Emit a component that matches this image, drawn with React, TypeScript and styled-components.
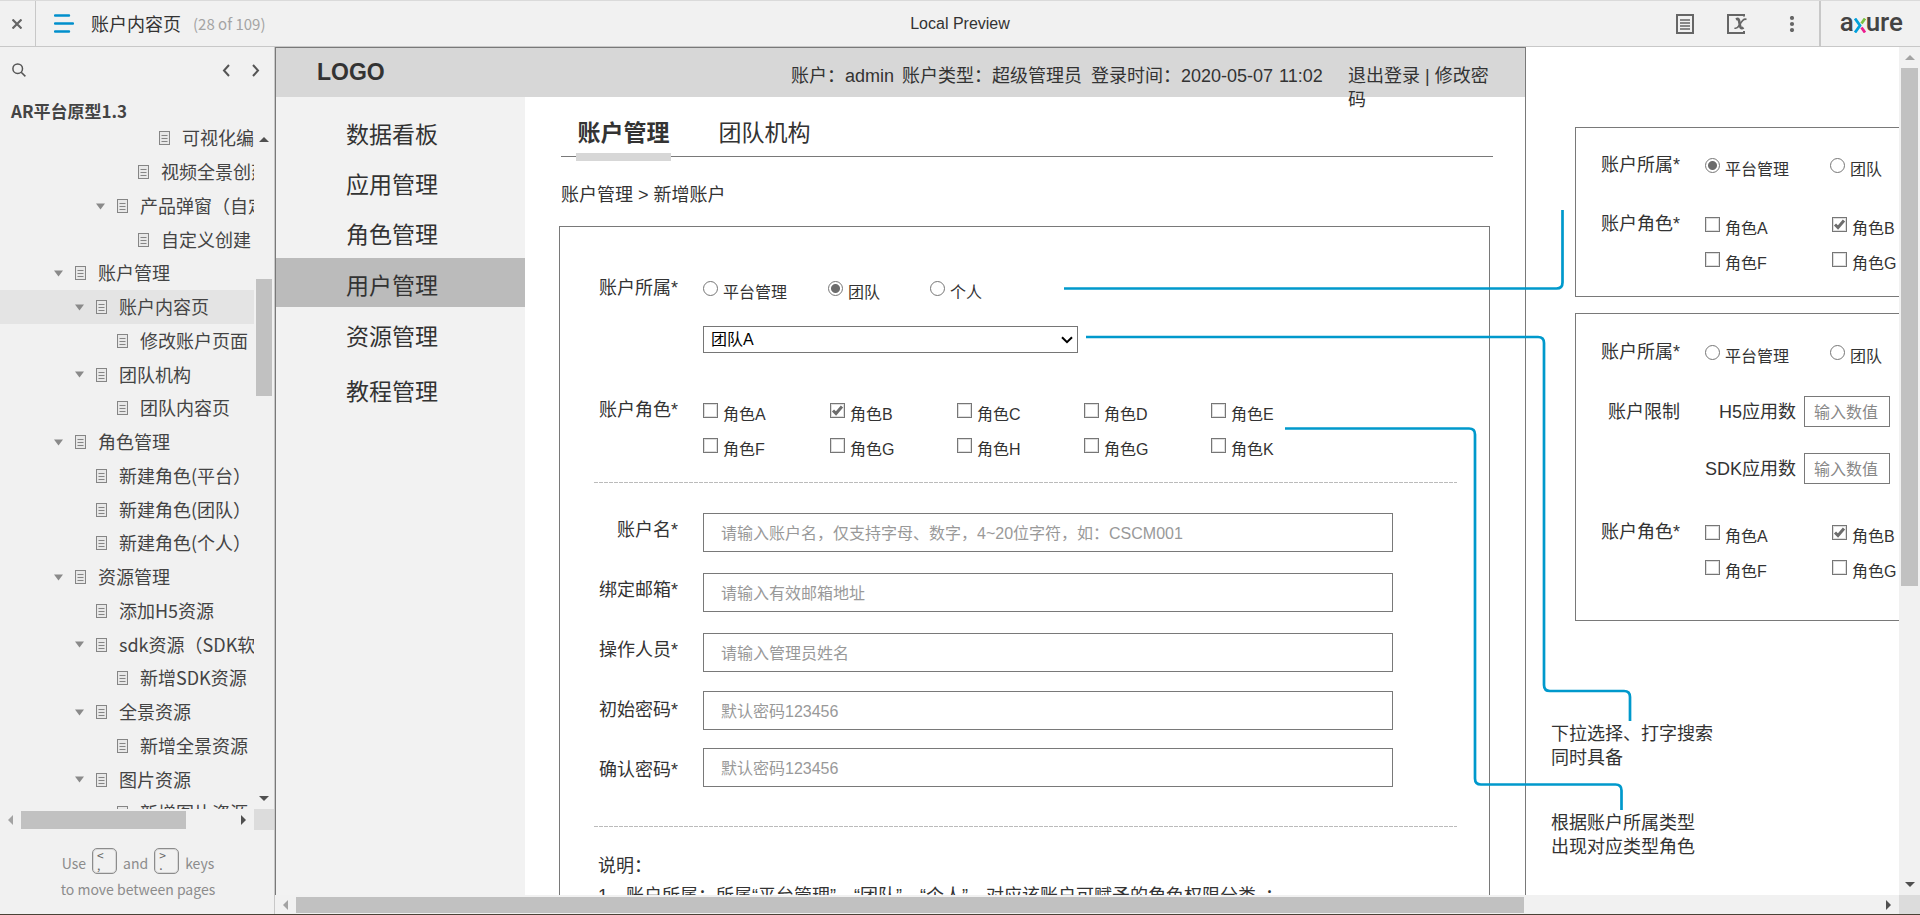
import React from 'react';
import styled, { createGlobalStyle, css } from 'styled-components';

const Global = createGlobalStyle`
  *, *::before, *::after { box-sizing: border-box; }
  html, body, #root { height: 100%; }
  body {
    margin: 0;
    overflow: hidden;
    background: #fff;
    color: #333;
    font-family: "Liberation Sans", "Noto Sans CJK SC", sans-serif;
    font-size: 18px;
    line-height: 24px;
  }
  button { padding: 0; border: 0; background: none; color: inherit; font: inherit; cursor: pointer; }
  ul { margin: 0; padding: 0; list-style: none; }
  p, h1, h2 { margin: 0; }
  svg { display: block; flex: none; }
`;

const uiFont = '"Noto Sans CJK SC", "Noto Sans", sans-serif';

/* ---------- shell ---------- */

const Shell = styled.div`
  display: flex;
  flex-direction: column;
  height: 100vh;
  border-top: 1px solid #dadada;
  border-bottom: 1px solid #4a4236;
`;

const TopBar = styled.header`
  display: grid;
  grid-template-columns: 1fr auto 1fr;
  flex: none;
  height: 46px;
  background: #f1f1f1;
  border-bottom: 1px solid #c8c8c8;
`;

const BarGroup = styled.div<{ $end?: boolean }>`
  display: flex;
  align-items: center;
  justify-content: ${(p) => (p.$end ? 'flex-end' : 'flex-start')};
`;

const CloseButton = styled.button`
  display: grid;
  place-items: center;
  width: 36px;
  height: 100%;
  padding-right: 2px;
  border-right: 1px solid #c8c8c8;
`;

const MenuButton = styled.button`
  margin: 0 17px 0 18px;
`;

const PageName = styled.h1`
  padding-bottom: 2px;
  font-family: ${uiFont};
  font-size: 18px;
  font-weight: 400;
  line-height: 24px;
`;

const PageCount = styled.span`
  margin-left: 12px;
  color: #a4a4a4;
  font-family: ${uiFont};
  font-size: 15px;
`;

const BarTitle = styled.div`
  align-self: center;
  font-size: 16px;
`;

const BarIcons = styled.div`
  display: flex;
  align-items: center;
  gap: 33px;
  padding-right: 12px;
`;

const Brand = styled.a`
  display: flex;
  align-items: center;
  height: 100%;
  padding: 0 17px 4px 19px;
  border-left: 2px solid #c8c8c8;
  color: #444;
  font-family: Roboto, sans-serif;
  font-size: 26px;
  font-weight: 500;
  line-height: 30px;
  text-decoration: none;
  svg { margin-top: 7px; }
`;

const Workspace = styled.div`
  display: flex;
  flex: 1;
  min-height: 0;
`;

/* ---------- sidebar ---------- */

const Sidebar = styled.aside`
  display: flex;
  flex-direction: column;
  flex: none;
  width: 275px;
  background: #f1f1f1;
  border-right: 1px solid #c8c8c8;
  font-family: ${uiFont};
`;

const SidebarTools = styled.div`
  display: flex;
  align-items: center;
  gap: 22px;
  padding: 0 14px 0 12px;
  height: 46px;
  flex: none;
`;

const SearchButton = styled.button`
  margin-right: auto;
`;

const ProjectName = styled.h2`
  flex: none;
  padding: 6px 0 0 11px;
  height: 28px;
  color: #444;
  font-size: 17px;
  font-weight: 700;
  line-height: 24px;
`;

const TreeArea = styled.div`
  display: flex;
  flex: 1;
  min-height: 0;
`;

const Tree = styled.ul`
  flex: 1;
  min-width: 0;
  overflow: hidden;
`;

const TreeRow = styled.li<{ $level: number; $selected?: boolean }>`
  display: flex;
  align-items: center;
  height: 34px;
  padding-left: ${(p) => 54 + p.$level * 21}px;
  background: ${(p) => (p.$selected ? '#e4e4e4' : 'transparent')};
  color: #444;
  white-space: nowrap;
  &:nth-child(4n) { height: 33px; }
`;

const Twisty = styled.span`
  flex: none;
  width: 21px;
`;

const TreeLabel = styled.a`
  margin-left: 12px;
  padding-bottom: 2px;
  color: inherit;
  font-size: 18px;
  line-height: 24px;
  text-decoration: none;
`;

const SidebarHint = styled.p`
  display: grid;
  align-content: start;
  justify-items: center;
  flex: none;
  height: 84px;
  padding: 18px 0 0 2px;
  color: #8c8c8c;
  font-size: 14px;
  line-height: 26px;
`;

const HintLine = styled.span`
  display: flex;
  align-items: flex-end;
  gap: 6px;
`;

const Key = styled.kbd`
  display: flex;
  flex-direction: column;
  width: 25px;
  height: 26px;
  margin-bottom: 2px;
  padding: 1px 4px;
  border: 1px solid #8c8c8c;
  border-radius: 5px;
  box-shadow: inset 0 0 0 1px #d8d8d8;
  color: #666;
  font-family: ${uiFont};
  font-size: 12px;
  line-height: 10px;
`;

/* ---------- scroll bars ---------- */

const VBar = styled.div<{ $width: number; $top?: number }>`
  display: flex;
  flex-direction: column;
  align-items: center;
  flex: none;
  width: ${(p) => p.$width}px;
  padding-top: ${(p) => p.$top || 0}px;
  background: #f1f1f1;
`;

const HBar = styled.div<{ $height: number }>`
  display: flex;
  align-items: center;
  flex: none;
  height: ${(p) => p.$height}px;
  background: #f1f1f1;
`;

const BarArrow = styled.button`
  display: grid;
  place-items: center;
  flex: none;
  width: 21px;
  height: 21px;
`;

const Track = styled.div<{ $vertical?: boolean }>`
  display: flex;
  flex: 1;
  align-self: stretch;
  min-height: 0;
  flex-direction: ${(p) => (p.$vertical ? 'column' : 'row')};
  ${(p) => (p.$vertical ? css`padding: 0 2px 0 2px;` : css`padding: 2px 0 1px;`)}
`;

const Thumb = styled.div<{ $before: number; $after: number }>`
  display: contents;
  &::before { content: ""; flex: ${(p) => p.$before} 1 0; }
  &::after { content: ""; flex: ${(p) => p.$after} 1 0; }
`;

const ThumbFace = styled.span<{ $size: number }>`
  flex: ${(p) => p.$size} 1 0;
  background: #c1c1c1;
`;

const Corner = styled.span<{ $width: number }>`
  flex: none;
  align-self: stretch;
  width: ${(p) => p.$width}px;
  background: #dcdcdc;
`;

/* ---------- prototype canvas ---------- */

const Viewport = styled.main`
  display: flex;
  flex-direction: column;
  flex: 1;
  min-width: 0;
`;

const ViewportRow = styled.div`
  display: flex;
  flex: 1;
  min-height: 0;
`;

const Canvas = styled.div`
  position: relative;
  display: flex;
  flex: 1;
  min-width: 0;
  overflow: hidden;
  background: #fff;
`;

const Frame = styled.section`
  display: flex;
  flex-direction: column;
  flex: none;
  width: 1251px;
  border: 1px solid #797979;
  border-bottom: 0;
`;

const FrameHeader = styled.div`
  display: flex;
  justify-content: space-between;
  flex: none;
  height: 49px;
  padding: 0 27px 0 41px;
  background: #d7d7d7;
`;

const Logo = styled.strong`
  font-size: 23px;
  line-height: 48px;
`;

const Session = styled.div`
  display: grid;
  grid-template-columns: 111px 189px 188px 69px 150px;
  padding-top: 16px;
`;

const SessionLink = styled.a`
  color: inherit;
  text-decoration: none;
`;

const FrameBody = styled.div`
  display: flex;
  flex: 1;
  min-height: 0;
`;

const SideNav = styled.nav`
  display: grid;
  grid-template-rows: 50px 50px 51px 51px 55px 49px;
  align-content: start;
  flex: none;
  width: 249px;
  padding-top: 10px;
  background: #f2f2f2;
`;

const NavItem = styled.button<{ $active?: boolean }>`
  height: 49px;
  padding: 7px 0 0 70px;
  background: ${(p) => (p.$active ? '#bbb' : 'transparent')};
  font-size: 23px;
  line-height: 30px;
  text-align: left;
`;

const FrameMain = styled.div`
  flex: 1;
  min-width: 0;
`;

const Tabs = styled.div`
  display: flex;
  gap: 46px;
  margin: 0 32px 0 36px;
  padding-left: 15px;
  border-bottom: 1px solid #797979;
`;

const Tab = styled.button<{ $active?: boolean }>`
  position: relative;
  min-width: 95px;
  padding: 21px 0 8px;
  font-size: 23px;
  font-weight: ${(p) => (p.$active ? 700 : 400)};
  line-height: 30px;
  ${(p) => p.$active && css`
    &::after {
      content: "";
      position: absolute;
      left: 0;
      right: 0;
      bottom: -5px;
      height: 8px;
      background: #d7d7d7;
    }
  `}
`;

const Crumbs = styled.p`
  margin: 26px 32px 19px 36px;
`;

const FormBox = styled.form`
  margin: 0 35px 0 34px;
  padding: 49px 32px 60px 0;
  border: 1px solid #797979;
`;

const Row = styled.div<{ $label: number; $top?: number; $center?: boolean }>`
  display: grid;
  grid-template-columns: ${(p) => p.$label}px 1fr;
  column-gap: 25px;
  align-items: ${(p) => (p.$center ? 'center' : 'start')};
  margin-top: ${(p) => p.$top || 0}px;
`;

const RowLabel = styled.span`
  text-align: right;
  white-space: nowrap;
`;

const Choices = styled.div<{ $cols: string }>`
  display: grid;
  grid-template-columns: ${(p) => p.$cols};
  row-gap: 11px;
  padding-top: 5px;
`;

const Choice = styled.label`
  display: flex;
  gap: 5px;
  font-size: 16px;
  line-height: 24px;
  white-space: nowrap;
`;

const Radio = styled.input.attrs({ type: 'radio' })`
  appearance: none;
  flex: none;
  width: 15px;
  height: 15px;
  margin: 0;
  border: 1px solid #767676;
  border-radius: 50%;
  background: #fff;
  &:checked { background: radial-gradient(circle, #6d6d6d 0 4px, #fff 5px); }
`;

const CheckWrap = styled.span`
  display: grid;
  width: 15px;
  height: 15px;
  > * { grid-area: 1 / 1; }
  svg { pointer-events: none; }
`;

const Checkbox = styled.input.attrs({ type: 'checkbox' })`
  appearance: none;
  width: 15px;
  height: 15px;
  margin: 0;
  border: 1px solid #767676;
  background: #fff;
  box-shadow: inset 0 0 0 1px #dedede;
`;

const SelectWrap = styled.div`
  display: grid;
  grid-column: 2;
  width: 375px;
  align-items: center;
  > * { grid-area: 1 / 1; }
  svg { justify-self: end; margin-right: 5px; pointer-events: none; }
`;

const Select = styled.select`
  appearance: none;
  height: 27px;
  padding: 0 7px;
  border: 1px solid #767676;
  border-radius: 0;
  background: #fff;
  color: #000;
  font: inherit;
  font-size: 16px;
`;

const Dashes = styled.hr<{ $top: number }>`
  height: 1px;
  margin: ${(p) => p.$top}px 0 0 34px;
  border: 0;
  background: repeating-linear-gradient(90deg, #bbb 0 4px, #fff 4px 5px);
`;

const Fields = styled.div`
  display: grid;
  grid-template-columns: 118px 690px;
  column-gap: 25px;
  margin-top: 17px;
`;

const FieldLabels = styled.div`
  display: flex;
  flex-direction: column;
  text-align: right;
  line-height: 60px;
`;

const FieldInputs = styled.div`
  display: grid;
  grid-template-rows: 60px 60px 58px 57px 39px;
  padding-top: 13px;
`;

const TextInput = styled.input<{ $small?: boolean }>`
  width: ${(p) => (p.$small ? '86px' : '100%')};
  height: ${(p) => (p.$small ? 31 : 39)}px;
  padding: 2px ${(p) => (p.$small ? '8px 0 9px' : '17px 0')};
  border: 1px solid #797979;
  border-radius: 0;
  background: #fff;
  color: #333;
  font: inherit;
  font-size: 16px;
  outline: none;
  &::placeholder { color: ${(p) => (p.$small ? '#888' : '#999')}; opacity: 1; }
`;

const Remarks = styled.div`
  margin: 24px 0 0 38px;
  line-height: 30px;
  white-space: nowrap;
`;

/* ---------- annotations beside the frame ---------- */

const Margin = styled.aside`
  display: flex;
  flex-direction: column;
  flex: 1;
  min-width: 0;
  padding: 80px 0 0 25px;
`;

const VariantCard = styled.div<{ $pad: string; $top?: number }>`
  flex: none;
  width: 560px;
  margin: ${(p) => p.$top || 0}px 0 0 24px;
  padding: ${(p) => p.$pad};
  border: 1px solid #797979;
`;

const LimitField = styled.label`
  display: grid;
  grid-template-columns: 91px 86px;
  column-gap: 8px;
  align-items: center;
  text-align: right;
  white-space: nowrap;
`;

const Note = styled.p<{ $top: number }>`
  margin-top: ${(p) => p.$top}px;
  white-space: pre-line;
`;

const Connectors = styled.svg`
  position: absolute;
  top: 0;
  left: 0;
  width: 1624px;
  height: 848px;
  pointer-events: none;
`;

/* ---------- drawings ---------- */

const arrowPaths = {
  up: 'M0 6 L5 1 L10 6 Z',
  down: 'M0 1 L10 1 L5 6 Z',
  left: 'M6 0 L1 5 L6 10 Z',
  right: 'M1 0 L6 5 L1 10 Z',
};

function Arrow({ dir, dim }: { dir: keyof typeof arrowPaths; dim?: boolean }) {
  const vertical = dir === 'up' || dir === 'down';
  return (
    <BarArrow type="button" aria-label={`scroll ${dir}`}>
      <svg width={vertical ? 10 : 7} height={vertical ? 7 : 10}>
        <path d={arrowPaths[dir]} fill={dim ? '#a3a3a3' : '#505050'} />
      </svg>
    </BarArrow>
  );
}

function ScrollThumb({ before, size, after }: { before: number; size: number; after: number }) {
  return (
    <Thumb $before={before} $after={after}>
      <ThumbFace $size={size} />
    </Thumb>
  );
}

const DocIcon = () => (
  <svg width="11" height="14" fill="none" stroke="#858585">
    <rect x="0.5" y="0.5" width="10" height="13" fill="#e8e8e8" />
    <path d="M2.5 4.5h6M2.5 7.5h6M2.5 10.5h6" />
  </svg>
);

const Chevron = ({ d }: { d: string }) => (
  <svg width="8" height="13" fill="none" stroke="#555" strokeWidth="2">
    <path d={d} />
  </svg>
);

/* ---------- data ---------- */

type Node = { level: number; text: string; open?: boolean; selected?: boolean };

const nodes: Node[] = [
  { level: 4, text: '可视化编辑' },
  { level: 3, text: '视频全景创建' },
  { level: 2, text: '产品弹窗（自定义）', open: true },
  { level: 3, text: '自定义创建' },
  { level: 0, text: '账户管理', open: true },
  { level: 1, text: '账户内容页', open: true, selected: true },
  { level: 2, text: '修改账户页面' },
  { level: 1, text: '团队机构', open: true },
  { level: 2, text: '团队内容页' },
  { level: 0, text: '角色管理', open: true },
  { level: 1, text: '新建角色(平台）' },
  { level: 1, text: '新建角色(团队）' },
  { level: 1, text: '新建角色(个人）' },
  { level: 0, text: '资源管理', open: true },
  { level: 1, text: '添加H5资源' },
  { level: 1, text: 'sdk资源（SDK软件）', open: true },
  { level: 2, text: '新增SDK资源' },
  { level: 1, text: '全景资源', open: true },
  { level: 2, text: '新增全景资源' },
  { level: 1, text: '图片资源', open: true },
  { level: 2, text: '新增图片资源' },
];

const navItems = ['数据看板', '应用管理', '角色管理', '用户管理', '资源管理', '教程管理'];

const fields = [
  { id: 'name', label: '账户名*', hint: '请输入账户名，仅支持字母、数字，4~20位字符，如：CSCM001' },
  { id: 'mail', label: '绑定邮箱*', hint: '请输入有效邮箱地址' },
  { id: 'operator', label: '操作人员*', hint: '请输入管理员姓名' },
  { id: 'password', label: '初始密码*', hint: '默认密码123456' },
  { id: 'confirm', label: '确认密码*', hint: '默认密码123456' },
];

/* ---------- form parts ---------- */

function OwnerRow({ group, label, options, chosen }: { group: string; label: number; options: string[]; chosen?: string }) {
  return (
    <Row $label={label} role="radiogroup" aria-labelledby={`${group}-label`}>
      <RowLabel id={`${group}-label`}>账户所属*</RowLabel>
      <Choices $cols="125px 102px auto">
        {options.map((o) => (
          <Choice key={o}>
            <Radio name={group} defaultChecked={o === chosen} />
            {o}
          </Choice>
        ))}
      </Choices>
    </Row>
  );
}

function RoleRow({ group, label, top, roles, cols }: { group: string; label: number; top: number; roles: string[]; cols: number }) {
  return (
    <Row $label={label} $top={top} role="group" aria-labelledby={`${group}-label`}>
      <RowLabel id={`${group}-label`}>账户角色*</RowLabel>
      <Choices $cols={`repeat(${cols}, 127px)`}>
        {roles.map((r, i) => (
          <Choice key={i}>
            <CheckWrap>
              <Checkbox defaultChecked={r === 'B'} />
              {r === 'B' && (
                <svg width="15" height="15" fill="none" stroke="#6d6d6d" strokeWidth="3">
                  <path d="M3 7.5 L6 10.5 L12 3.5" />
                </svg>
              )}
            </CheckWrap>
            角色{r}
          </Choice>
        ))}
      </Choices>
    </Row>
  );
}

/* ---------- app ---------- */

export default function App() {
  return (
    <Shell>
      <Global />
      <TopBar>
        <BarGroup>
          <CloseButton type="button" aria-label="close">
            <svg width="10" height="10" stroke="#666" strokeWidth="2.2">
              <path d="M0.5 0.5 L9.5 9.5 M9.5 0.5 L0.5 9.5" />
            </svg>
          </CloseButton>
          <MenuButton type="button" aria-label="menu">
            <svg width="20" height="19" stroke="#008fcc" strokeWidth="2.4" strokeLinecap="round">
              <path d="M1 1.5h14M1 9.5h18M1 17.5h14" />
            </svg>
          </MenuButton>
          <PageName>账户内容页</PageName>
          <PageCount>(28 of 109)</PageCount>
        </BarGroup>
        <BarTitle>Local Preview</BarTitle>
        <BarGroup $end>
          <BarIcons>
            <button type="button" aria-label="notes">
              <svg width="18" height="20" fill="none" stroke="#666" strokeWidth="2">
                <rect x="1" y="1" width="16" height="18" />
                <path d="M4 6h10M4 9h10M4 12h10M4 15h10" strokeWidth="1.6" />
              </svg>
            </button>
            <button type="button" aria-label="variables">
              <svg width="21" height="20" fill="none" stroke="#666" strokeWidth="2">
                <path d="M17 2.5V1H1v18h16v-2" />
                <path d="M9 5.5c2.5-1.5 3 0 3.5 3.5c.6 4.5 1.5 6.5 4 4.5" strokeWidth="2.6" />
                <path d="M19.5 5.5c-2.5-1.5-5 2-7 5.5c-1.5 2.5-3 4-5 3" strokeWidth="1.6" />
              </svg>
            </button>
            <button type="button" aria-label="more">
              <svg width="26" height="16" fill="#666">
                <circle cx="11" cy="2" r="2.1" />
                <circle cx="11" cy="8" r="2.1" />
                <circle cx="11" cy="14" r="2.1" />
              </svg>
            </button>
          </BarIcons>
          <Brand href="#" aria-label="axure">
            a
            <svg width="12" height="15" fill="none" strokeWidth="2.8">
              <path d="M1 0.5 L6 7.5 L1 14.5" stroke="#00a0dc" />
              <path d="M11 0.5 L7.5 5.5" stroke="#7ac143" />
              <path d="M7.5 9.5 L11 14.5" stroke="#ec1c8e" />
            </svg>
            ure
          </Brand>
        </BarGroup>
      </TopBar>

      <Workspace>
        <Sidebar>
          <SidebarTools>
            <SearchButton type="button" aria-label="search">
              <svg width="14" height="14" fill="none" stroke="#555" strokeWidth="1.5">
                <circle cx="5.7" cy="5.7" r="4.8" />
                <path d="M9.2 9.2 L13.4 13.4" />
              </svg>
            </SearchButton>
            <button type="button" aria-label="previous page"><Chevron d="M7 1 L2 6.5 L7 12" /></button>
            <button type="button" aria-label="next page"><Chevron d="M1 1 L6 6.5 L1 12" /></button>
          </SidebarTools>
          <ProjectName>AR平台原型1.3</ProjectName>
          <TreeArea>
            <Tree>
              {nodes.map((n, i) => (
                <TreeRow key={i} $level={n.level} $selected={n.selected}>
                  <Twisty>
                    {n.open && (
                      <svg width="9" height="7"><path d="M0 0.5h9L4.5 6.5Z" fill="#8a8a8a" /></svg>
                    )}
                  </Twisty>
                  <DocIcon />
                  <TreeLabel href="#">{n.text}</TreeLabel>
                </TreeRow>
              ))}
            </Tree>
            <VBar $width={20} $top={8}>
              <Arrow dir="up" />
              <Track $vertical><ScrollThumb before={129} size={117} after={392} /></Track>
              <Arrow dir="down" />
            </VBar>
          </TreeArea>
          <HBar $height={21}>
            <Arrow dir="left" dim />
            <Track><ScrollThumb before={0} size={165} after={47} /></Track>
            <Arrow dir="right" />
            <Corner $width={20} />
          </HBar>
          <SidebarHint>
            <HintLine>Use <Key><span>&lt;</span><span>,</span></Key> and <Key><span>&gt;</span><span>.</span></Key> keys</HintLine>
            <HintLine>to move between pages</HintLine>
          </SidebarHint>
        </Sidebar>

        <Viewport>
          <ViewportRow>
            <Canvas>
              <Frame>
                <FrameHeader>
                  <Logo>LOGO</Logo>
                  <Session>
                    <span>账户：admin</span>
                    <span>账户类型：超级管理员</span>
                    <span>登录时间：2020-05-07</span>
                    <span>11:02</span>
                    <div>
                      <SessionLink href="#">退出登录</SessionLink>
                      <span> | </span>
                      <SessionLink href="#">修改密码</SessionLink>
                    </div>
                  </Session>
                </FrameHeader>
                <FrameBody>
                  <SideNav>
                    {navItems.map((t) => (
                      <NavItem key={t} type="button" $active={t === '用户管理'}>{t}</NavItem>
                    ))}
                  </SideNav>
                  <FrameMain>
                    <Tabs>
                      <Tab type="button" $active>账户管理</Tab>
                      <Tab type="button">团队机构</Tab>
                    </Tabs>
                    <Crumbs>账户管理 &gt; 新增账户</Crumbs>
                    <FormBox>
                      <OwnerRow group="owner" label={118} options={['平台管理', '团队', '个人']} chosen="团队" />
                      <Row $label={118} $top={21}>
                        <SelectWrap>
                          <Select aria-label="团队">
                            <option>团队A</option>
                          </Select>
                          <svg width="12" height="8" fill="none" stroke="#000" strokeWidth="2">
                            <path d="M1 1.2 L6 6.2 L11 1.2" />
                          </svg>
                        </SelectWrap>
                      </Row>
                      <RoleRow group="role" label={118} top={45} cols={5} roles={['A', 'B', 'C', 'D', 'E', 'F', 'G', 'H', 'G', 'K']} />
                      <Dashes $top={20} />
                      <Fields>
                        <FieldLabels>
                          {fields.map((f) => <label key={f.id} htmlFor={f.id}>{f.label}</label>)}
                        </FieldLabels>
                        <FieldInputs>
                          {fields.map((f) => <TextInput key={f.id} id={f.id} placeholder={f.hint} />)}
                        </FieldInputs>
                      </Fields>
                      <Dashes $top={26} />
                      <Remarks>
                        <p>说明：</p>
                        <p>1、账户所属：所属“平台管理”、“团队”、“个人”，对应该账户可赋予的角色权限分类。；</p>
                      </Remarks>
                    </FormBox>
                  </FrameMain>
                </FrameBody>
              </Frame>

              <Margin>
                <VariantCard $pad="25px 0 20px">
                  <OwnerRow group="owner-platform" label={104} options={['平台管理', '团队']} chosen="平台管理" />
                  <RoleRow group="role-platform" label={104} top={30} cols={2} roles={['A', 'B', 'F', 'G']} />
                </VariantCard>
                <VariantCard $pad="26px 0 36px" $top={16}>
                  <OwnerRow group="owner-person" label={104} options={['平台管理', '团队']} />
                  <Row $label={104} $top={27} $center>
                    <RowLabel>账户限制</RowLabel>
                    <LimitField>H5应用数<TextInput $small placeholder="输入数值" /></LimitField>
                  </Row>
                  <Row $label={104} $top={26} $center>
                    <span />
                    <LimitField>SDK应用数<TextInput $small placeholder="输入数值" /></LimitField>
                  </Row>
                  <RoleRow group="role-person" label={104} top={36} cols={2} roles={['A', 'B', 'F', 'G']} />
                </VariantCard>
                <Note $top={101}>{'下拉选择、打字搜索\n同时具备'}</Note>
                <Note $top={41}>{'根据账户所属类型\n出现对应类型角色'}</Note>
              </Margin>

              <Connectors fill="none" stroke="#0099cc" strokeWidth="2.7">
                <path d="M789 241.5 H1281.5 Q1287.5 241.5 1287.5 235.5 V163" />
                <path d="M811 290 H1263 Q1269 290 1269 296 V638 Q1269 644 1275 644 H1349 Q1355 644 1355 650 V674" />
                <path d="M1010 381.5 H1194 Q1200 381.5 1200 387.5 V731.5 Q1200 737.5 1206 737.5 H1340.5 Q1346.5 737.5 1346.5 743.5 V763" />
              </Connectors>
            </Canvas>
            <VBar $width={21}>
              <Arrow dir="up" dim />
              <Track $vertical><ScrollThumb before={0} size={518} after={288} /></Track>
              <Arrow dir="down" />
            </VBar>
          </ViewportRow>
          <HBar $height={19}>
            <Arrow dir="left" dim />
            <Track><ScrollThumb before={0} size={1228} after={354} /></Track>
            <Arrow dir="right" />
            <Corner $width={21} />
          </HBar>
        </Viewport>
      </Workspace>
    </Shell>
  );
}
